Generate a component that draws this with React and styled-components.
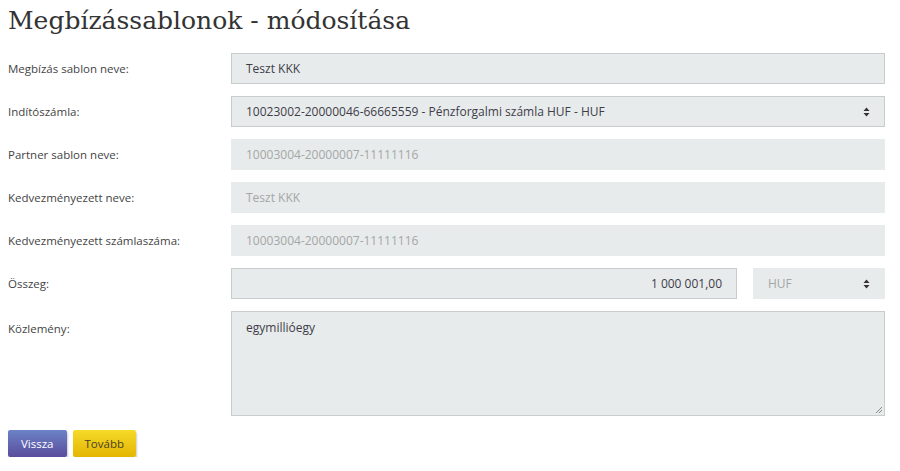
import React from "react";
import styled, { createGlobalStyle } from "styled-components";

const GlobalStyle = createGlobalStyle`
  body {
    margin: 0;
    background: #ffffff;
    font-family: "Open Sans", "Liberation Sans", sans-serif;
    color: #333333;
  }
`;

const Page = styled.div`
  padding: 0 15px 0 8px;
`;

const Title = styled.h1`
  margin: 0;
  padding-top: 4px;
  height: 38px;
  font-family: "DejaVu Serif", "Liberation Serif", serif;
  font-weight: 400;
  font-size: 25px;
  line-height: 34px;
  color: #333333;
`;

const Form = styled.form`
  display: flex;
  flex-direction: column;
  gap: 12px;
  margin-top: 11px;
`;

const Row = styled.div`
  display: grid;
  grid-template-columns: 223px 1fr;
  align-items: ${(p) => (p.top ? "start" : "center")};
`;

const Label = styled.label`
  font-size: 11.5px;
  color: #444444;
  padding-top: ${(p) => (p.top ? "10px" : "0")};
`;

const Field = styled.div`
  box-sizing: border-box;
  height: ${(p) => p.h || 31}px;
  padding: ${(p) => (p.area ? "7px 14px" : "0 14px")};
  display: flex;
  align-items: ${(p) => (p.area ? "flex-start" : "center")};
  justify-content: ${(p) => (p.right ? "flex-end" : "space-between")};
  background: #e8ebeb;
  border: 1px solid ${(p) => (p.disabled ? "#e8ebeb" : "#c9cdcd")};
  color: ${(p) => (p.disabled ? "#a3a7a7" : "#3d3d4a")};
  font-size: 12px;
  position: relative;
`;

const Split = styled.div`
  display: grid;
  grid-template-columns: 1fr 132px;
  gap: 16px;
`;

const Caret = styled.svg`
  width: 7px;
  height: 10px;
  flex: none;
`;

const Grip = styled.svg`
  position: absolute;
  right: 1px;
  bottom: 1px;
  width: 9px;
  height: 9px;
`;

const Buttons = styled.div`
  display: flex;
  gap: 6px;
  margin-top: 14px;
`;

const Button = styled.button`
  height: 27px;
  padding: 0 ${(p) => (p.primary ? 13 : 12)}px;
  border: none;
  border-radius: 2px;
  font-family: "Open Sans", "Liberation Sans", sans-serif;
  font-size: 11.5px;
  cursor: pointer;
  box-shadow: 1px 2px 2px rgba(0, 0, 0, 0.2);
  background: ${(p) =>
    p.primary
      ? "linear-gradient(#6c83c6, #5a4c9e)"
      : "linear-gradient(#f6da2a, #e3b602)"};
  color: ${(p) => (p.primary ? "#ffffff" : "#4a4020")};
`;

const SelectCaret = () => (
  <Caret viewBox="0 0 7 10">
    <path d="M3.5 0.5 L6.5 4 L0.5 4 Z M3.5 9.5 L6.5 6 L0.5 6 Z" fill="#333" />
  </Caret>
);

export default function App() {
  return (
    <Page>
      <GlobalStyle />
      <Title>Megbízássablonok - módosítása</Title>
      <Form>
        <Row>
          <Label>Megbízás sablon neve:</Label>
          <Field>Teszt KKK</Field>
        </Row>
        <Row>
          <Label>Indítószámla:</Label>
          <Field>
            <span>10023002-20000046-66665559 - Pénzforgalmi számla HUF - HUF</span>
            <SelectCaret />
          </Field>
        </Row>
        <Row>
          <Label>Partner sablon neve:</Label>
          <Field disabled>10003004-20000007-11111116</Field>
        </Row>
        <Row>
          <Label>Kedvezményezett neve:</Label>
          <Field disabled>Teszt KKK</Field>
        </Row>
        <Row>
          <Label>Kedvezményezett számlaszáma:</Label>
          <Field disabled>10003004-20000007-11111116</Field>
        </Row>
        <Row>
          <Label>Összeg:</Label>
          <Split>
            <Field right>1 000 001,00</Field>
            <Field disabled>
              <span>HUF</span>
              <SelectCaret />
            </Field>
          </Split>
        </Row>
        <Row top>
          <Label top>Közlemény:</Label>
          <Field area h={105}>
            egymillióegy
            <Grip viewBox="0 0 9 9">
              <path d="M8 2 L2 8 M8 5 L5 8" stroke="#888" strokeWidth="1" />
            </Grip>
          </Field>
        </Row>
      </Form>
      <Buttons>
        <Button type="button" primary>Vissza</Button>
        <Button type="button">Tovább</Button>
      </Buttons>
    </Page>
  );
}
